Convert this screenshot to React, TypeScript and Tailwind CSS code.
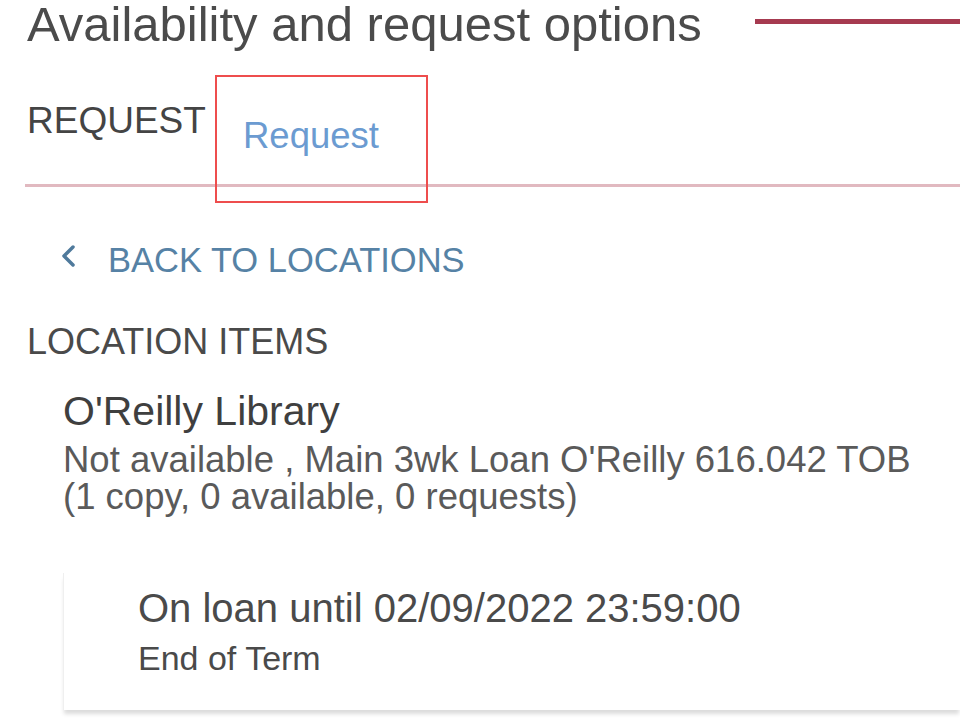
export default function App() {
  return (
    <div className="h-[721px] w-[960px] overflow-hidden bg-white font-['Liberation_Sans',Arial,sans-serif] pl-[25px]">
      {/* heading */}
      <div className="flex h-[48px] items-start">
        <h1 className="ml-[2px] whitespace-nowrap text-[49px] leading-[49px] text-[#4b4b4b]">
          Availability and request options
        </h1>
        <div className="ml-auto mt-[19px] h-[5px] w-[205px] bg-[#a63a50]" />
      </div>

      {/* tabs */}
      <div className="relative mt-[54px] flex h-[85px] items-start border-b-[3px] border-[#e1b9c0]">
        <span className="ml-[2px] w-[216px] text-[37px] leading-[37px] text-[#444]">
          REQUEST
        </span>
        <span className="mt-[16px] text-[36.5px] leading-[36px] text-[#6b9bd1]">
          Request
        </span>
        <div className="absolute left-[190px] top-[-27px] h-[128px] w-[213px] border-2 border-[#ee4d4d]" />
      </div>

      {/* back link */}
      <div className="mt-[56px] flex items-start">
        <svg
          className="ml-[35px]"
          width="18"
          height="26"
          viewBox="0 0 18 26"
          fill="none"
          stroke="#4f7a9c"
          strokeWidth="3.5"
          strokeLinecap="round"
          strokeLinejoin="round"
        >
          <polyline points="13,4 4,13 13,22" />
        </svg>
        <span className="ml-[30px] text-[34.5px] leading-[34px] text-[#5682a5]">
          BACK TO LOCATIONS
        </span>
      </div>

      <div className="mt-[47px] pl-[2px] text-[36px] leading-[36px] text-[#4a4a4a]">
        LOCATION ITEMS
      </div>

      {/* location */}
      <div className="mt-[31px] pl-[38px]">
        <div className="text-[41px] leading-[41px] text-[#3f3f3f]">O'Reilly Library</div>
        <div className="mt-[9px] text-[36.5px] leading-[37px] text-[#5a5a5a]">
          <div>Not available , Main 3wk Loan O'Reilly 616.042 TOB</div>
          <div>(1 copy, 0 available, 0 requests)</div>
        </div>
      </div>

      {/* item card */}
      <div className="ml-[38px] mt-[58px] border-l border-[#efefef] bg-white pb-[35px] pl-[74px] pt-[15px] shadow-[0_5px_4px_-1px_rgba(0,0,0,0.14)]">
        <div className="text-[40px] leading-[40px] text-[#4a4a4a]">
          On loan until 02/09/2022 23:59:00
        </div>
        <div className="mt-[13px] text-[34px] leading-[34px] text-[#4a4a4a]">End of Term</div>
      </div>
    </div>
  );
}
